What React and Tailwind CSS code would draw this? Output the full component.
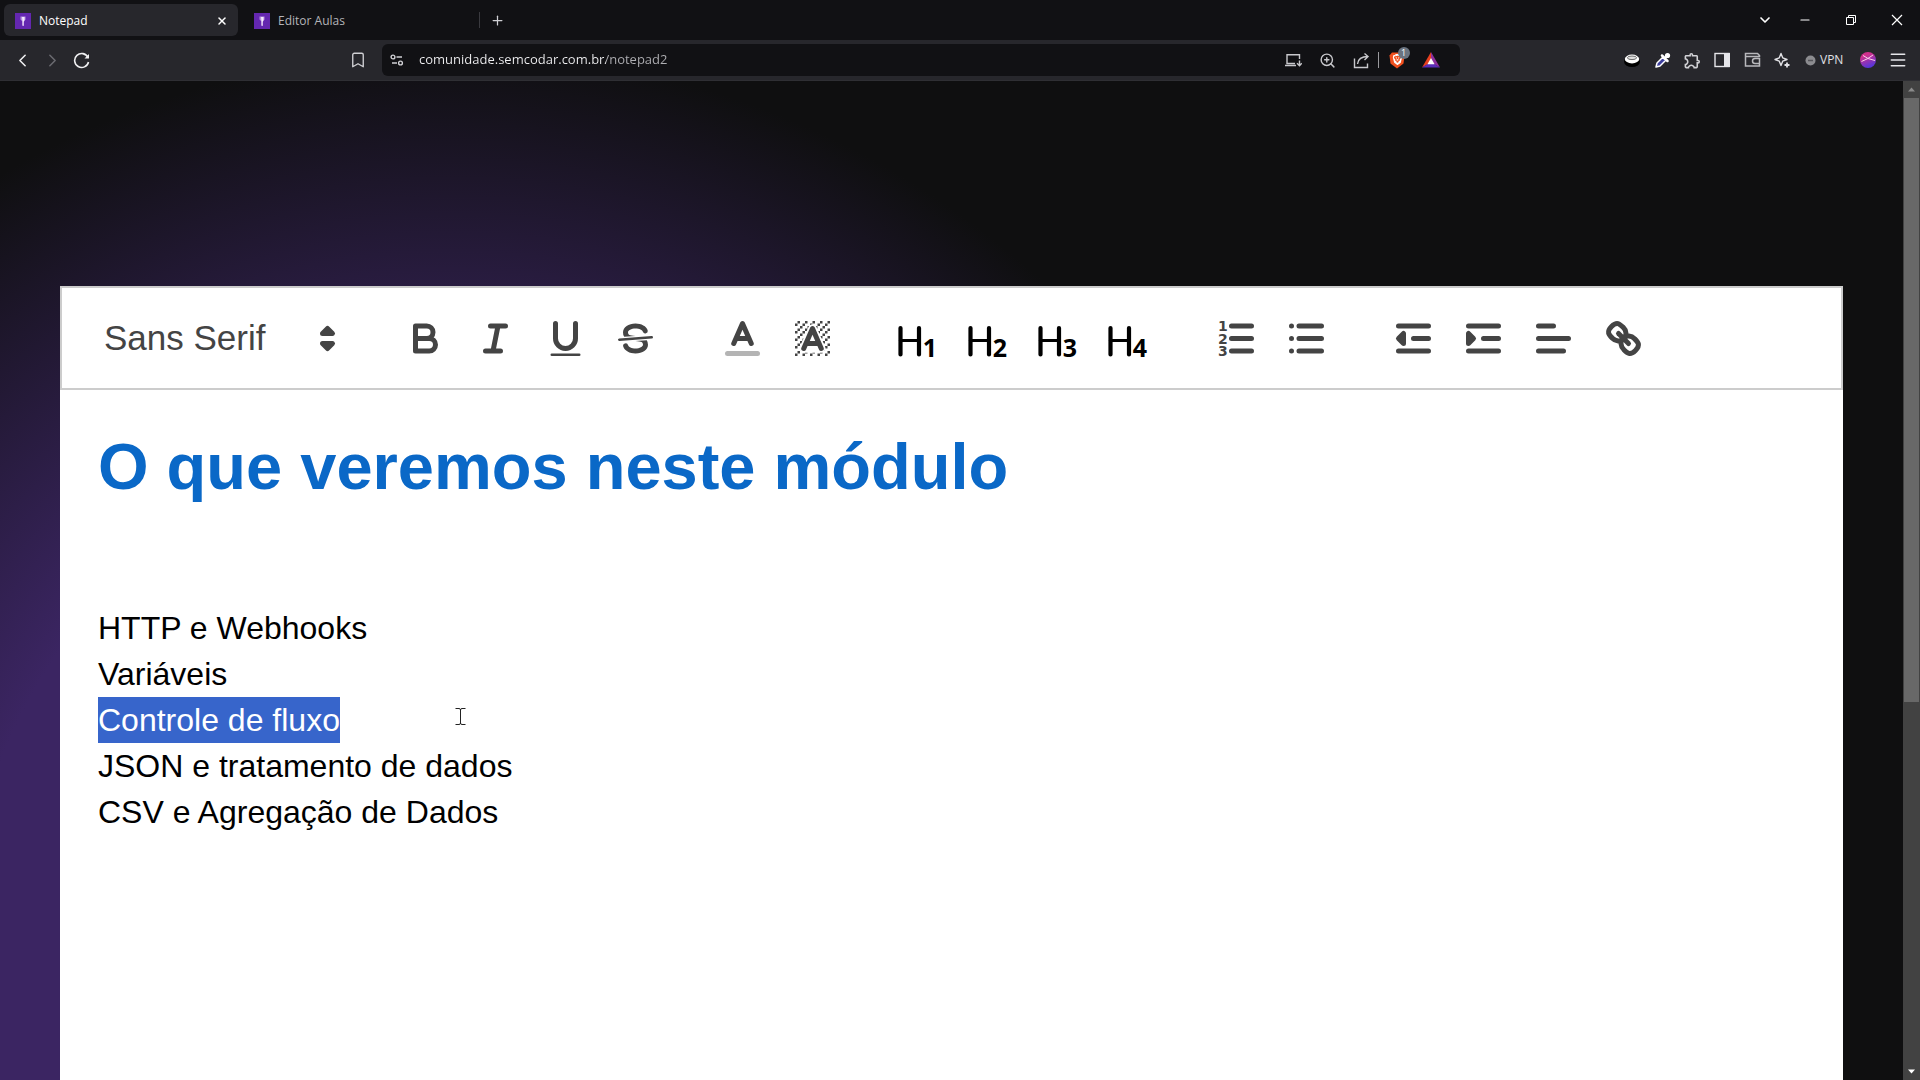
import { useState } from 'react';
import {
  Bookmark,
  ChevronDown,
  ChevronLeft,
  ChevronRight,
  Menu,
  Minus,
  Plus,
  X,
  ZoomIn,
} from 'lucide-react';
import { MdOutlineExtension } from 'react-icons/md';
import { SiBrave } from 'react-icons/si';

// Ícones da barra do editor (viewBox 18x18, traço arredondado)
function ToolIcon({ children }) {
  return (
    <svg
      viewBox="0 0 18 18"
      className="w-[45px] h-[45px]"
      fill="none"
      stroke="#444"
      strokeWidth="2"
      strokeLinecap="round"
      strokeLinejoin="round"
      aria-hidden="true"
    >
      {children}
    </svg>
  );
}

// Hachura diagonal do ícone de cor de fundo
const hatch = [];
for (let row = 0; row < 14; row++) {
  for (let col = 0; col < 14; col++) {
    if ((row + col) % 3 === 1) hatch.push([col + 2, row + 2]);
  }
}

function HeadingIcon({ level }) {
  return (
    <svg viewBox="0 0 45 45" className="w-[45px] h-[45px] overflow-visible" aria-hidden="true">
      <g stroke="#000" strokeLinecap="round">
        <path d="M3.5 12v26.5M22 12v26.5" strokeWidth="4.2" />
        <path d="M3.5 24.5H22" strokeWidth="3.2" />
      </g>
      <text
        x="33"
        y="41"
        textAnchor="middle"
        className="font-['Noto_Sans',sans-serif] text-[25px] font-bold"
      >
        {level}
      </text>
    </svg>
  );
}

const groups = [
  [
    {
      label: 'Negrito',
      icon: (
        <ToolIcon>
          <path d="M5,4H9.5A2.5,2.5,0,0,1,12,6.5v0A2.5,2.5,0,0,1,9.5,9H5Z" />
          <path d="M5,9h5.5A2.5,2.5,0,0,1,13,11.5v0A2.5,2.5,0,0,1,10.5,14H5Z" />
        </ToolIcon>
      ),
    },
    {
      label: 'Itálico',
      icon: (
        <ToolIcon>
          <path d="M7 4H13M5 14H11M8 14L10 4" />
        </ToolIcon>
      ),
    },
    {
      label: 'Sublinhado',
      icon: (
        <ToolIcon>
          <path d="M5,3V9a4.012,4.012,0,0,0,4,4H9a4.012,4.012,0,0,0,4-4V3" />
          <rect x="3" y="15" width="12" height="1" rx="0.5" fill="#444" stroke="none" />
        </ToolIcon>
      ),
    },
    {
      label: 'Tachado',
      icon: (
        <ToolIcon>
          <path d="M15.5 8.5L2.5 9.5" strokeWidth="1" />
          <g fill="#444" stroke="none">
            <path d="M9.007,8C6.542,7.791,6,7.519,6,6.5,6,5.792,7.283,5,9,5c1.571,0,2.765.679,2.969,1.309a1,1,0,0,0,1.9-.617C13.356,4.106,11.354,3,9,3,6.2,3,4,4.538,4,6.5a3.2,3.2,0,0,0,.5,1.843Z" />
            <path d="M8.984,10C11.457,10.208,12,10.479,12,11.5c0,0.708-1.283,1.5-3,1.5-1.571,0-2.765-.679-2.969-1.309a1,1,0,1,0-1.9.617C4.644,13.894,6.646,15,9,15c2.8,0,5-1.538,5-3.5a3.2,3.2,0,0,0-.5-1.843Z" />
          </g>
        </ToolIcon>
      ),
    },
  ],
  [
    {
      label: 'Cor do texto',
      icon: (
        <ToolIcon>
          <path d="M3 15H15" opacity="0.4" />
          <path d="M5.5 11L9 3L12.5 11M11.63 9H6.38" />
        </ToolIcon>
      ),
    },
    {
      label: 'Cor de fundo',
      icon: (
        <ToolIcon>
          <g fill="#444" stroke="none">
            {hatch.map(([x, y]) => (
              <rect key={`${x}-${y}`} x={x} y={y} width="1" height="1" />
            ))}
          </g>
          <path d="M5.5 13L9 5L12.5 13Z" stroke="#fff" strokeWidth="3.4" fill="#fff" />
          <path d="M5.5 13L9 5L12.5 13M11.63 11H6.38" />
        </ToolIcon>
      ),
    },
  ],
  [
    { label: 'Título 1', icon: <HeadingIcon level="1" /> },
    { label: 'Título 2', icon: <HeadingIcon level="2" /> },
    { label: 'Título 3', icon: <HeadingIcon level="3" /> },
    { label: 'Título 4', icon: <HeadingIcon level="4" /> },
  ],
  [
    {
      label: 'Lista numerada',
      icon: (
        <ToolIcon>
          <path d="M7 4H15M7 9H15M7 14H15" />
          <g
            fill="#444"
            stroke="none"
            fontFamily="'DejaVu Sans', sans-serif"
            fontWeight="700"
            fontSize="5.6"
          >
            <text x="1.6" y="6.1">1</text>
            <text x="1.6" y="11.1">2</text>
            <text x="1.6" y="16.1">3</text>
          </g>
        </ToolIcon>
      ),
    },
    {
      label: 'Lista com marcadores',
      icon: (
        <ToolIcon>
          <path d="M6 4H15M6 9H15M6 14H15M3 4V4M3 9V9M3 14V14" />
        </ToolIcon>
      ),
    },
  ],
  [
    {
      label: 'Diminuir recuo',
      icon: (
        <ToolIcon>
          <path d="M3 4H15M3 14H15M9 9H15" />
          <path d="M5 7V11L3 9Z" fill="#444" />
        </ToolIcon>
      ),
    },
    {
      label: 'Aumentar recuo',
      icon: (
        <ToolIcon>
          <path d="M3 4H15M3 14H15M9 9H15" />
          <path d="M3 7V11L5 9Z" fill="#444" />
        </ToolIcon>
      ),
    },
    {
      label: 'Alinhamento',
      icon: (
        <ToolIcon>
          <path d="M3 9H15M3 14H13M3 4H9" />
        </ToolIcon>
      ),
    },
    {
      label: 'Link',
      icon: (
        <ToolIcon>
          <path d="M7 7L11 11" />
          <path d="M8.9,4.577a3.476,3.476,0,0,1,.36,4.679A3.476,3.476,0,0,1,4.577,8.9C3.185,7.5,2.035,6.4,4.217,4.217S7.5,3.185,8.9,4.577Z" />
          <path d="M13.423,9.1a3.476,3.476,0,0,0-4.679-.36,3.476,3.476,0,0,0,.36,4.679c1.392,1.392,2.5,2.542,4.679.36S14.815,10.5,13.423,9.1Z" />
        </ToolIcon>
      ),
    },
  ],
];

function Favicon() {
  return (
    <svg viewBox="0 0 16 16" className="w-4 h-4 shrink-0" aria-hidden="true">
      <rect width="16" height="16" fill="#6427b0" />
      <path d="M5.5 3.5h5v3l-1.5 2v4.5h-1.5V8.5l-2-2z" fill="#b892e0" />
      <path d="M7 4h2.5v3L8.5 9v3.5h-1V8z" fill="#f3eafc" />
    </svg>
  );
}

function IconButton({ label, className = 'w-[30px]', children }) {
  return (
    <button
      type="button"
      aria-label={label}
      className={`flex items-center justify-center h-8 shrink-0 ${className}`}
    >
      {children}
    </button>
  );
}

// Faixa de abas com os botões da janela
function TabStrip() {
  return (
    <div className="flex items-center h-10 bg-[#111114] pl-1 text-xs">
      <div className="flex items-center w-[234px] h-8 pl-[11px] pr-2 pt-px rounded-md bg-[#27272c] text-white">
        <Favicon />
        <span className="ml-2 flex-1">Notepad</span>
        <button type="button" aria-label="Fechar aba" className="flex items-center justify-center w-4 h-4">
          <X size={12} strokeWidth={3} />
        </button>
      </div>
      <div className="flex items-center w-[241px] h-8 pl-4 pt-px text-[#b4b4b8]">
        <Favicon />
        <span className="ml-2">Editor Aulas</span>
      </div>
      <span className="w-px h-4 bg-[#3a3a3f]" />
      <IconButton label="Nova aba" className="w-[34px]">
        <Plus size={15} color="#d0d0d4" strokeWidth={2} />
      </IconButton>
      <div className="flex ml-auto text-white">
        <IconButton label="Pesquisar abas" className="w-[34px]">
          <ChevronDown size={16} strokeWidth={2.5} />
        </IconButton>
        <IconButton label="Minimizar" className="w-[46px]">
          <Minus size={14} strokeWidth={1.8} />
        </IconButton>
        <IconButton label="Restaurar" className="w-[46px]">
          <svg width="12" height="12" fill="none" stroke="#fff" aria-hidden="true">
            <path d="M1.5 3.5h7v7h-7zM3.5 3V1.5h7v7H9" />
          </svg>
        </IconButton>
        <IconButton label="Fechar" className="w-[46px]">
          <svg width="12" height="12" stroke="#fff" strokeWidth="1.2" aria-hidden="true">
            <path d="M1 1l10 10M11 1L1 11" />
          </svg>
        </IconButton>
      </div>
    </div>
  );
}

function AddressBar() {
  const [url, setUrl] = useState('comunidade.semcodar.com.br/notepad2');

  return (
    <div className="flex flex-1 items-center h-8 pl-[7px] pr-3 rounded-md bg-[#111114]">
      <IconButton label="Informações do site" className="w-4">
        <svg width="14" height="14" fill="none" stroke="#d0d0d4" strokeWidth="1.4" aria-hidden="true">
          <circle cx="3" cy="4" r="1.9" />
          <path d="M6.5 4H12M2 10h5" />
          <circle cx="10.5" cy="10" r="1.9" />
        </svg>
      </IconButton>
      <input
        type="text"
        aria-label="Endereço"
        value={url}
        spellCheck={false}
        onChange={(e) => setUrl(e.target.value)}
        className="flex-1 min-w-0 ml-[14px] text-[13px] bg-[linear-gradient(90deg,#f0f0f2_187px,#b0b0b4_187px)] bg-clip-text text-transparent caret-white outline-none"
      />
      <IconButton label="Instalar app" className="w-[34px]">
        <svg width="18" height="18" fill="none" stroke="#c8c8cc" strokeWidth="1.4" aria-hidden="true">
          <path d="M15.5 8V3.7H3V12.5h8M1 14.5h11M15.5 9.5v5M13 12.3l2.5 2.5 2.3-2.5" />
        </svg>
      </IconButton>
      <IconButton label="Zoom" className="w-[34px]">
        <ZoomIn size={17} color="#c8c8cc" strokeWidth={2} />
      </IconButton>
      <IconButton label="Compartilhar" className="w-[34px]">
        <svg width="17" height="17" fill="none" stroke="#c8c8cc" strokeWidth="1.4" aria-hidden="true">
          <path d="M1.5 6.5v9h13v-4M4.5 12c.5-5 4-7.5 10.5-7.5M11.5 1.5L15 4.5l-3.5 3.5" />
        </svg>
      </IconButton>
      <span className="w-px h-4 bg-[#9a9a9e]" />
      <IconButton label="Brave Shields" className="w-[35px]">
        <span className="relative">
          <svg width="18" height="18" viewBox="0 0 18 18" aria-hidden="true">
            <path d="M4 1.5h10l2.5 3-1 8L9 17.5l-6.5-5-1-8z" fill="#f0501e" />
          </svg>
          <SiBrave size={11} color="#fff" className="absolute left-1 top-[3px]" />
          <span className="absolute -right-1 -top-1 w-3 h-3 rounded-full bg-[#6b7480] text-[9px] leading-3 text-center text-white">
            1
          </span>
        </span>
      </IconButton>
      <IconButton label="Brave Rewards" className="w-[34px]">
        <svg width="18" height="16" viewBox="0 0 18 16" aria-hidden="true">
          <path d="M9 0L0 15.5l9-5z" fill="#e8401f" />
          <path d="M9 0l9 15.5-9-5z" fill="#8e2f9c" />
          <path d="M0 15.5h18l-9-5.5z" fill="#5a2db8" />
          <path d="M9 6l3.6 6.2H5.4z" fill="#fff" />
        </svg>
      </IconButton>
    </div>
  );
}

function Extensions() {
  return (
    <div className="flex items-center justify-end w-[460px] pr-[7px]">
      <IconButton label="Extensão">
        <svg width="16" height="14" viewBox="0 0 16 14" aria-hidden="true">
          <ellipse cx="8" cy="8.5" rx="8" ry="5.5" fill="#000" />
          <ellipse cx="8" cy="6" rx="7.2" ry="4.4" fill="#fff" />
          <ellipse cx="8" cy="4.8" rx="4.6" ry="1.8" fill="#ddd" stroke="#333" strokeWidth="0.7" />
        </svg>
      </IconButton>
      <IconButton label="Conta-gotas">
        <svg width="17" height="17" viewBox="0 0 17 17" aria-hidden="true">
          <path d="M2 15l1-4 6-6 3 3-6 6z" fill="#3d3f9e" stroke="#fff" strokeWidth="1.5" strokeLinejoin="round" />
          <path d="M8 3.5L13.5 9M10.5 6.5L14 3" stroke="#fff" strokeWidth="2.5" strokeLinecap="round" />
          <circle cx="13.5" cy="3.5" r="2.6" fill="#fff" />
        </svg>
      </IconButton>
      <IconButton label="Extensões">
        <MdOutlineExtension size={19} color="#d0d0d4" />
      </IconButton>
      <IconButton label="Barra lateral">
        <svg width="16" height="16" aria-hidden="true">
          <rect x="1" y="1.5" width="14" height="13" fill="none" stroke="#e6e6ea" strokeWidth="1.4" />
          <rect x="10" y="1" width="6" height="14" fill="#e6e6ea" />
        </svg>
      </IconButton>
      <IconButton label="Carteira">
        <svg width="17" height="16" fill="none" stroke="#b8b8bc" strokeWidth="1.5" aria-hidden="true">
          <path d="M15.5 5V3.5L13.5 1.5H1.5v12.5h14V12M1.5 4.5h14M15.5 6.5h-4.5a2.5 2.5 0 0 0 0 5h4.5z" />
        </svg>
      </IconButton>
      <IconButton label="Leo AI">
        <svg width="17" height="17" fill="none" stroke="#e0e0e4" strokeWidth="1.4" strokeLinejoin="round" aria-hidden="true">
          <path d="M7 1.5l1.7 4.3L13 7.5 8.7 9.2 7 13.5 5.3 9.2 1 7.5l4.3-1.7z" />
          <path d="M13 10.5v5M10.5 13h5" strokeWidth="1.8" />
        </svg>
      </IconButton>
      <button type="button" className="flex items-center gap-1 w-14 h-8 pl-2 text-xs text-[#e0e0e4]">
        <svg width="11" height="11" className="shrink-0" aria-hidden="true">
          <circle cx="5.5" cy="5.5" r="5" fill="#8c8c90" />
          <path d="M3 5.5h5" stroke="#55555a" strokeWidth="1.5" />
        </svg>
        VPN
      </button>
      <IconButton label="Perfil">
        <svg width="16" height="16" viewBox="0 0 16 16" aria-hidden="true">
          <defs>
            <linearGradient id="avatar" x1="0" y1="0" x2="0.4" y2="1">
              <stop offset="0.3" stopColor="#d0308c" />
              <stop offset="1" stopColor="#5a35d8" />
            </linearGradient>
          </defs>
          <circle cx="8" cy="8" r="8" fill="url(#avatar)" />
          <path d="M1.5 9.5Q8 7 13 3M3 3.5Q7 7 15 8.5" fill="none" stroke="#ffd0e8" />
        </svg>
      </IconButton>
      <IconButton label="Menu">
        <Menu size={20} color="#e6e6ea" strokeWidth={1.8} />
      </IconButton>
    </div>
  );
}

function NavBar() {
  return (
    <div className="flex items-center h-[41px] bg-[#27272c] border-b border-[#2f2f34]">
      <div className="flex items-center w-[382px] pl-[7px] pr-2">
        <IconButton label="Voltar">
          <ChevronLeft size={21} color="#f0f0f2" strokeWidth={1.8} />
        </IconButton>
        <IconButton label="Avançar">
          <ChevronRight size={21} color="#6a6a70" strokeWidth={1.8} />
        </IconButton>
        <IconButton label="Recarregar">
          <svg width="18" height="18" fill="none" stroke="#f0f0f2" strokeWidth="1.6" aria-hidden="true">
            <path d="M15 6.5A7 7 0 1 0 15.5 11" />
            <path d="M11.5 7.5h4.5V3z" fill="#f0f0f2" stroke="none" />
          </svg>
        </IconButton>
        <IconButton label="Favoritos" className="w-8 ml-auto">
          <Bookmark size={18} color="#d0d0d4" strokeWidth={1.8} />
        </IconButton>
      </div>
      <AddressBar />
      <Extensions />
    </div>
  );
}

function EditorToolbar() {
  return (
    <div className="flex flex-wrap items-center gap-[37px] p-5 bg-white border-2 border-[#ccc]">
      <div className="relative w-[271px]">
        <select
          aria-label="Fonte"
          defaultValue="sans"
          className="w-full h-[60px] pl-[22px] appearance-none text-[35px] text-[#444] outline-none"
        >
          <option value="sans">Sans Serif</option>
          <option value="serif">Serif</option>
          <option value="mono">Monospace</option>
        </select>
        <span className="absolute right-[3px] top-2 pointer-events-none">
          <ToolIcon>
            <path d="M7 11L9 13L11 11ZM7 7L9 5L11 7Z" fill="#444" />
          </ToolIcon>
        </span>
      </div>
      {groups.map((group) => (
        <div key={group[0].label} className="flex">
          {group.map(({ label, icon }) => (
            <button
              key={label}
              type="button"
              aria-label={label}
              className="flex items-center justify-center w-[70px] h-[60px]"
            >
              {icon}
            </button>
          ))}
        </div>
      ))}
    </div>
  );
}

function Editor() {
  return (
    <div
      contentEditable
      suppressContentEditableWarning
      spellCheck={false}
      className="flex-1 bg-white px-[38px] py-[30px] text-[32px] leading-[46px] text-black outline-none"
    >
      <h1 className="text-[65px] leading-[93px] font-bold text-[#0a68c7]">O que veremos neste módulo</h1>
      <p><br /></p>
      <p><br /></p>
      <p>HTTP e Webhooks</p>
      <p>Variáveis</p>
      <p>
        <span className="inline-block bg-[#3765cb] text-white">Controle de fluxo</span>
      </p>
      <p>JSON e tratamento de dados</p>
      <p>CSV e Agregação de Dados</p>
    </div>
  );
}

function Scrollbar() {
  return (
    <div className="flex flex-col w-[17px] bg-[#424242]" aria-hidden="true">
      <svg width="17" height="17"><path d="M5 10.5h7L8.5 6.5z" fill="#8a8a8a" /></svg>
      <div className="h-[604px] mx-px bg-[#686868]" />
      <svg width="17" height="17" className="mt-auto"><path d="M5 6.5h7l-3.5 4z" fill="#fff" /></svg>
    </div>
  );
}

export default function App() {
  return (
    <div className="flex flex-col h-screen overflow-hidden font-['Open_Sans','Noto_Sans',sans-serif]">
      <header>
        <TabStrip />
        <NavBar />
      </header>
      <div className="flex flex-1 min-h-0">
        <main className="relative flex flex-col flex-1 px-[60px] pt-[205px] font-['Liberation_Sans',Arial,sans-serif] bg-[#0f0f10] bg-[radial-gradient(circle_at_450px_850px,#3b2562_480px,#0f0f10_880px)]">
          <EditorToolbar />
          <Editor />
          {/* Cursor de texto sobre a página */}
          <svg
            width="11"
            height="17"
            className="absolute left-[455px] top-[627px]"
            fill="none"
            stroke="#222"
            aria-hidden="true"
          >
            <path d="M.5 .5h3.5q1.5 0 1.5 1.5q0-1.5 1.5-1.5h3.5M5.5 2v13M.5 16.5h3.5q1.5 0 1.5-1.5q0 1.5 1.5 1.5h3.5" />
          </svg>
        </main>
        <Scrollbar />
      </div>
    </div>
  );
}
